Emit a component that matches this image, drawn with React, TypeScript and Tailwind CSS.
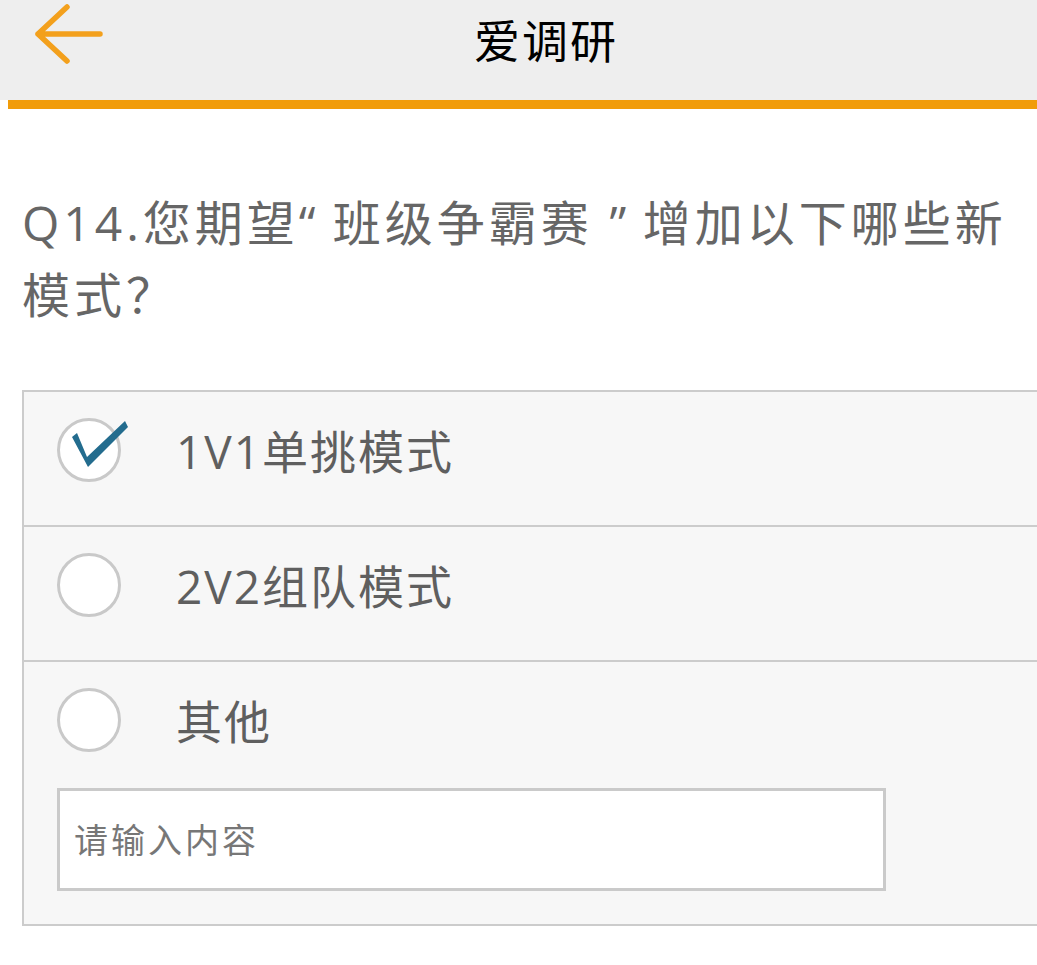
import { useState } from "react";

const options = [
  { id: "1v1", label: "1V1单挑模式" },
  { id: "2v2", label: "2V2组队模式" },
  { id: "other", label: "其他" },
];

const font = "font-['Open_Sans','Noto_Sans_CJK_SC',sans-serif]";

function Radio({ checked }: { checked: boolean }) {
  return (
    <div className="relative w-[64px] h-[64px] shrink-0 rounded-full border-[3px] border-[#c9c9c9] bg-white">
      {checked && (
        <svg
          className="absolute left-[-3px] top-[-3px] overflow-visible"
          width="64"
          height="64"
          viewBox="0 0 64 64"
        >
          <polygon points="15,19 20,15 30,39 68,3 71,9 31,49" fill="#236c8e" />
        </svg>
      )}
    </div>
  );
}

export default function App() {
  const [selected, setSelected] = useState<string[]>(["1v1"]);
  const [other, setOther] = useState("");

  const toggle = (id: string) => {
    setSelected((s) => (s.includes(id) ? s.filter((x) => x !== id) : [...s, id]));
  };

  return (
    <div className={`w-[1037px] min-h-[965px] bg-white ${font}`}>
      {/* Header */}
      <header className="h-[100px] bg-[#eeeeee] flex items-center">
        <button className="ml-[34px] mb-[34px]" aria-label="返回">
          <svg width="70" height="62" viewBox="0 0 70 62" fill="none">
            <path
              d="M33 5 L4 32 L33 59 M4 32 L66 32"
              stroke="#f3a01c"
              strokeWidth="5.5"
              strokeLinecap="round"
              strokeLinejoin="round"
            />
          </svg>
        </button>
        <h1 className="ml-[370px] mb-[20px] text-[46px] tracking-[2px] leading-none text-black">爱调研</h1>
      </header>
      <div className="ml-[8px] h-[9px] bg-[#f19c0a]" />

      {/* Question */}
      <div className="pl-[22px] pt-[78px]">
        <p className="text-[48px] leading-[72px] tracking-[4px] text-[#666666] whitespace-nowrap">
          Q14.您期望
          <span className="inline-block w-[34px] tracking-normal">“</span>
          班级争霸赛
          <span className="inline-block w-[50px] tracking-normal text-center">”</span>
          增加以下哪些新
          <br />
          模式？
        </p>
      </div>

      {/* Options */}
      <div className="mt-[59px] ml-[22px] border-2 border-r-0 border-[#cccccc] bg-[#f7f7f7]">
        {options.map((o, i) => (
          <div
            key={o.id}
            className={`${i < options.length - 1 ? "border-b-2 border-[#cccccc] h-[135px]" : "pb-[33px]"} pt-[26px]`}
          >
            <div className="flex items-center cursor-pointer" onClick={() => toggle(o.id)}>
              <div className="ml-[33px]">
                <Radio checked={selected.includes(o.id)} />
              </div>
              <span className="ml-[55px] mt-[2px] text-[46px] leading-none tracking-[2px] text-[#5f5f5f]">
                {o.label}
              </span>
            </div>
            {o.id === "other" && (
              <input
                value={other}
                onChange={(e) => setOther(e.target.value)}
                placeholder="请输入内容"
                className="block mt-[36px] ml-[33px] w-[829px] h-[103px] border-[3px] border-[#cacaca] bg-white pl-[14px] text-[34px] tracking-[3px] text-[#555] placeholder:text-[#777777] outline-none"
              />
            )}
          </div>
        ))}
      </div>
    </div>
  );
}
